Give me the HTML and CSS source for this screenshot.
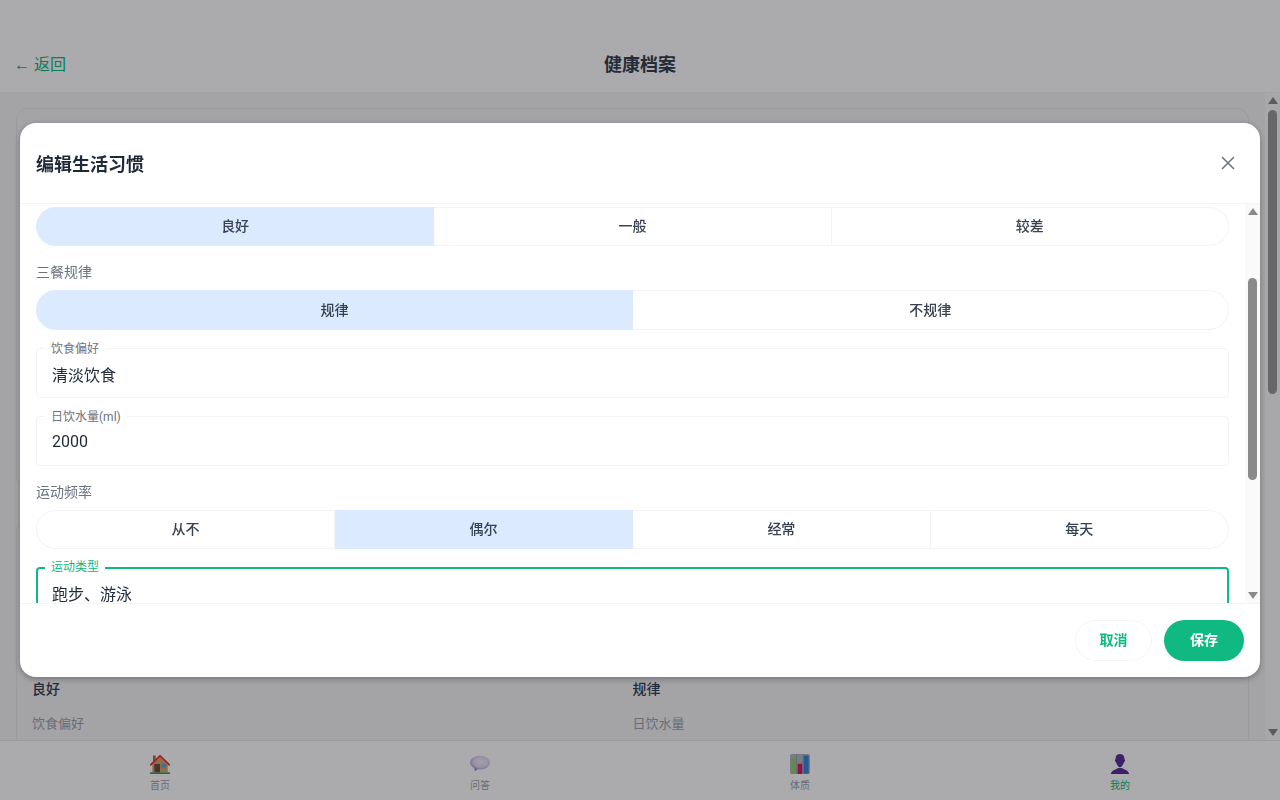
FILE: index.html
```html
<!DOCTYPE html>
<html lang="zh-CN">
<head>
<meta charset="utf-8">
<title>健康档案</title>
<link rel="stylesheet" href="styles.css">
</head>
<body>
<div class="app">
  <header class="topbar">
    <a class="back">← 返回</a>
    <h1 class="page-title">健康档案</h1>
  </header>
  <div class="main-row">
    <main class="content">
      <section class="card card-basic">
        <h2 class="card-title">基本信息</h2>
        <div class="info-grid">
          <div class="info"><div class="info-label">姓名</div><div class="info-value">张三</div></div>
          <div class="info"><div class="info-label">性别</div><div class="info-value">男</div></div>
        </div>
      </section>
      <section class="card card-life">
        <h2 class="card-title">生活习惯</h2>
        <div class="info-grid">
          <div class="info"><div class="info-label">睡眠时长</div><div class="info-value">8小时</div></div>
          <div class="info"><div class="info-label">作息习惯</div><div class="info-value">规律</div></div>
          <div class="info"><div class="info-label">睡眠质量</div><div class="info-value">良好</div></div>
          <div class="info"><div class="info-label">三餐规律</div><div class="info-value">规律</div></div>
          <div class="info"><div class="info-label">饮食偏好</div><div class="info-value">清淡饮食</div></div>
          <div class="info"><div class="info-label">日饮水量</div><div class="info-value">2000ml</div></div>
        </div>
      </section>
    </main>
    <div class="rail rail-main">
      <span class="arrow-up"></span>
      <span class="thumb thumb-main"></span>
      <span class="arrow-down"></span>
    </div>
  </div>
  <nav class="tabbar">
    <a class="tab">
      <svg class="tab-icon" viewBox="0 0 20 20">
        <path d="M3 1.500h2.700v7H3z" fill="#a9714b"/>
        <path d="M2.300 10L10 3l7.700 7v8.400H2.300z" fill="#d7a06f"/>
        <path d="M4.400 10h5.600v8.400H4.400z" fill="#6d4c41"/>
        <path d="M11.400 10H16v3.400h-4.600z" fill="#4fa8e8"/>
        <path d="M0 18.300h20V20H0z" fill="#43a047"/>
        <path d="M.7 10.800L10 1.800l9.300 9" fill="none" stroke="#e53935" stroke-width="1.800" stroke-linecap="round" stroke-linejoin="round"/>
      </svg>
      <span class="tab-text">首页</span>
    </a>
    <a class="tab">
      <svg class="tab-icon" viewBox="0 0 20 20">
        <defs>
          <radialGradient id="bubble" cx=".55" cy=".45" r=".6">
            <stop offset="0" stop-color="#f6f0ff"/>
            <stop offset=".65" stop-color="#e2d8f4"/>
            <stop offset="1" stop-color="#a996d2"/>
          </radialGradient>
        </defs>
        <path d="M4.400 13.500l.4 3.700 3.400-2.600z" fill="#8d78c0"/>
        <ellipse cx="10" cy="8.600" rx="10" ry="6.800" fill="url(#bubble)"/>
      </svg>
      <span class="tab-text">问答</span>
    </a>
    <a class="tab">
      <svg class="tab-icon" viewBox="0 0 20 20">
        <rect width="20" height="20" rx="2" fill="#b8b8c6"/>
        <path d="M6.500 0v20M13 0v20" stroke="#8f8f9e" stroke-width=".6"/>
        <path d="M1.300 4h4.700v16H1.300z" fill="#8bd170"/>
        <path d="M7.600 9.800h4.600V20H7.600z" fill="#d81b60"/>
        <path d="M13.700 1.500h5v18.300h-5z" fill="#3a86d8"/>
      </svg>
      <span class="tab-text">体质</span>
    </a>
    <a class="tab tab-active">
      <svg class="tab-icon" viewBox="0 0 20 20">
        <path d="M5.600 3.800C5.800 1.300 7.600 0 10 0s4.200 1.300 4.400 3.800c.1.600.1 1.200.1 1.800.5 0 .7.400.6 1-.1.700-.5 1.300-1 1.300-.5 1.900-2.300 5.400-4.100 5.400S6.400 9.800 5.900 7.900c-.5 0-.9-.6-1-1.300-.1-.6.1-1 .6-1 0-.6 0-1.200.1-1.800z" fill="#5a3495"/>
        <path d="M.8 20c.5-2.600 3-4.300 6.200-5.300l1-.6h4l1 .6c3.200 1 5.700 2.700 6.200 5.300z" fill="#5a3495"/>
      </svg>
      <span class="tab-text">我的</span>
    </a>
  </nav>
</div>

<div class="scrim"></div>

<div class="dialog">
  <div class="dialog-head">
    <h2 class="dialog-title">编辑生活习惯</h2>
    <button class="close" aria-label="关闭">
      <svg class="close-icon" viewBox="0 0 16 16"><path d="M2 2l12 12M14 2L2 14"/></svg>
    </button>
  </div>
  <div class="dialog-row">
    <div class="dialog-body" id="dialogBody">
      <div class="field"><label class="field-label">睡眠时长(小时)</label><input class="field-input" value="8"></div>
      <div class="group-label">睡眠质量</div>
      <div class="seg">
        <button class="seg-item seg-on">良好</button>
        <button class="seg-item">一般</button>
        <button class="seg-item">较差</button>
      </div>
      <div class="group-label">三餐规律</div>
      <div class="seg">
        <button class="seg-item seg-on">规律</button>
        <button class="seg-item">不规律</button>
      </div>
      <div class="field field-next"><label class="field-label">饮食偏好</label><input class="field-input" value="清淡饮食"></div>
      <div class="field field-next"><label class="field-label">日饮水量(ml)</label><input class="field-input" value="2000"></div>
      <div class="group-label">运动频率</div>
      <div class="seg">
        <button class="seg-item">从不</button>
        <button class="seg-item seg-on">偶尔</button>
        <button class="seg-item">经常</button>
        <button class="seg-item">每天</button>
      </div>
      <div class="field field-next field-focus"><label class="field-label">运动类型</label><input class="field-input" value="跑步、游泳"></div>
    </div>
    <div class="rail rail-dialog">
      <span class="arrow-up"></span>
      <span class="thumb thumb-dialog"></span>
      <span class="arrow-down"></span>
    </div>
  </div>
  <div class="dialog-foot">
    <button class="btn btn-ghost">取消</button>
    <button class="btn btn-primary">保存</button>
  </div>
</div>
<script src="app.js"></script>
</body>
</html>
```
FILE: styles.css
```css
* { box-sizing: border-box; }
html, body { margin: 0; height: 100%; overflow: hidden; }
body {
  font-family: Roboto, "Liberation Sans", "Noto Sans CJK SC", sans-serif;
  color: #1f2937;
  background: #f5f5f7;
}
button, input { font-family: inherit; }

.app { height: 100vh; display: flex; flex-direction: column; }

.topbar {
  height: 93px;
  flex: none;
  padding: 40px 14px 7px;
  display: grid;
  grid-template-columns: 1fr auto 1fr;
  align-items: center;
  background: #fff;
  border-bottom: 1px solid #f3f4f6;
}
.back { color: #10b981; font-size: 16px; grid-column: 1; grid-row: 1; }
.page-title { margin: 0; font-size: 18px; font-weight: 700; grid-column: 2; grid-row: 1; color: #374151; }

.main-row { flex: 1; min-height: 0; display: flex; }
.content { flex: 1; min-width: 0; overflow: hidden; padding: 15px 16px 20px; }
.card { border: 1px solid #e5e7eb; border-radius: 12px; background: #f5f5f7; }
.card-basic { height: 380px; padding: 16px 15px; }
.card-life { height: 600px; margin-top: 32px; padding: 15px 15px; }
.card-title { margin: 0 0 24px; font-size: 16px; line-height: 28px; font-weight: 600; }
.info-grid { display: grid; grid-template-columns: 1fr 1fr; row-gap: 15px; }
.info-label { font-size: 13px; line-height: 20px; color: #9ca3af; }
.info-value { font-size: 14px; line-height: 20px; font-weight: 500; margin-top: 8px; color: #374151; }

.rail { width: 15px; flex: none; display: flex; flex-direction: column; align-items: center; padding: 4px 0; }
.rail-main { background: #fbfbfb; }
.rail-dialog { background: #fafafa; }
.arrow-up, .arrow-down { width: 0; height: 0; border-left: 5px solid transparent; border-right: 5px solid transparent; flex: none; }
.arrow-up { border-bottom: 7px solid #8a8a8a; }
.arrow-down { border-top: 7px solid #8a8a8a; margin-top: auto; }
.thumb { width: 9px; border-radius: 5px; background: #8a8a8a; flex: none; }
.thumb-main { height: 284px; margin-top: 6px; background: #9a9a9a; }
.thumb-dialog { height: 202px; margin-top: 63px; }

.tabbar { height: 60px; flex: none; display: flex; background: #fff; border-top: 1px solid #e5e7eb; }
.tab { flex: 1; display: flex; flex-direction: column; align-items: center; padding-top: 13px; color: #9ca3af; }
.tab-icon { width: 20px; height: 20px; flex: none; }
.tab-text { font-size: 10px; line-height: 14px; margin-top: 5px; }
.tab-active { color: #10b981; }

.scrim { position: fixed; inset: 0; background: rgba(0, 0, 5, .33); }

.dialog {
  position: fixed;
  left: 20px;
  top: 123px;
  width: 1240px;
  height: 554px;
  background: #fff;
  border-radius: 16px;
  overflow: hidden;
  display: flex;
  flex-direction: column;
  box-shadow: 0 2px 6px rgba(0, 0, 0, .3);
}
.dialog-head {
  height: 81px;
  flex: none;
  padding: 0 16px;
  display: flex;
  align-items: center;
  justify-content: space-between;
  border-bottom: 1px solid #f3f4f6;
}
.dialog-title { margin: 0; font-size: 18px; font-weight: 700; color: #1f2937; }
.close { width: 32px; height: 32px; padding: 0; border: 0; background: none; display: flex; align-items: center; justify-content: center; margin-top: -1px; }
.close-icon { width: 16px; height: 16px; fill: none; stroke: #6b7280; stroke-width: 1.5; }

.dialog-row { flex: 1; min-height: 0; display: flex; }
.dialog-body { flex: 1; min-width: 0; overflow: hidden; padding: 16.5px 16px 31px; }

.group-label { font-size: 14px; line-height: 20px; color: #6b7280; margin: 16px 0 8px; }
.seg { height: 39.5px; display: flex; margin-right: .2px; }
.seg-item {
  flex: 1 1 0;
  border: 1px solid #f3f4f6;
  border-left: 0;
  background: #fff;
  padding: 0 0 2px;
  font-size: 14px;
  font-weight: 500;
  color: #374151;
}
.seg-item:first-child { border-left: 1px solid #f3f4f6; border-radius: 20px 0 0 20px; }
.seg-item:last-child { border-radius: 0 20px 20px 0; }
.seg-on, .seg-on:first-child { background: #dbeafe; border-color: #dbeafe; }

.field { height: 50px; position: relative; border: 1px solid #f3f4f6; border-radius: 4px; }
.field-next { margin-top: 18px; }
.field-label {
  position: absolute;
  left: 8px;
  top: -8px;
  padding: 0 6px;
  background: #fff;
  font-size: 12px;
  line-height: 16px;
  color: #6b7280;
}
.field-input {
  display: block;
  width: 100%;
  height: 100%;
  border: 0;
  outline: 0;
  background: none;
  padding: 2px 15px 0;
  font-size: 16px;
  color: #1f2937;
}
.field-focus { border: 2px solid #10b981; }
.field-focus .field-label { color: #10b981; left: 7px; top: -10px; }
.field-focus .field-input { padding: 2px 14px 0; }

.dialog-foot {
  flex: none;
  height: 74px;
  padding: 16px;
  display: flex;
  justify-content: flex-end;
  gap: 12px;
  border-top: 1px solid #f3f4f6;
}
.btn { height: 41px; border-radius: 21px; font-size: 14px; font-weight: 700; padding: 0 0 3px; }
.btn-ghost { width: 77px; background: #fff; border: 1px solid #f3f4f6; color: #10b981; }
.btn-primary { width: 80px; background: #10b981; border: 0; color: #fff; }
```
FILE: app.js
```js
document.getElementById('dialogBody').scrollTop = 108;
```
